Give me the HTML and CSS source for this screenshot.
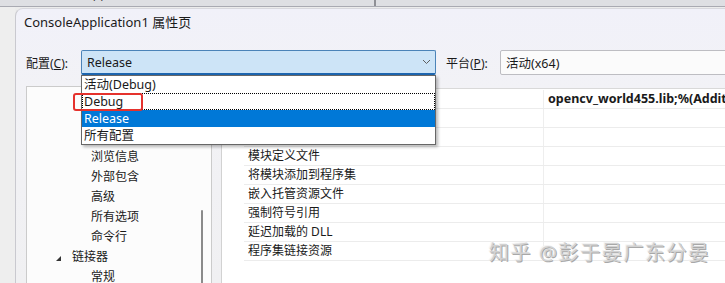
FILE: index.html
```html
<!DOCTYPE html>
<html lang="zh-CN">
<head>
    <meta charset="UTF-8">
    <title>ConsoleApplication1 属性页</title>
    <link rel="stylesheet" href="styles.css">
</head>
<body>

<!-- 背后的 VS 窗口，只露出一条 -->
<div class="topbar">
    <span class="tb-left">ConsoleApplication1</span>
    <span class="tb-sep"></span>
    <span class="tb-right">(全局范围)</span>
</div>

<div class="shell">
    <div class="gutter"></div>

    <div class="dialog">
        <div class="title">ConsoleApplication1 属性页</div>

        <div class="config-row">
            <label class="lbl">配置(<u>C</u>):</label>
            <div class="combo-wrap">
                <div class="combo combo-open">
                    <span>Release</span>
                    <svg class="chev" width="9" height="6" viewBox="0 0 9 6">
                        <polyline points="1,1 4.5,4.5 8,1" fill="none" stroke="#5f5f5f" stroke-width="1"/>
                    </svg>
                </div>
                <ul class="droplist">
                    <li>活动(Debug)</li>
                    <li class="focused">Debug</li>
                    <li class="selected">Release</li>
                    <li>所有配置</li>
                    <li class="redbox"></li>
                </ul>
            </div>
            <label class="lbl lbl-platform">平台(<u>P</u>):</label>
            <div class="combo combo-plain"><span>活动(x64)</span></div>
        </div>

        <div class="content">
            <div class="tree">
                <div class="node l2 hidden-row"></div>
                <div class="node l2 hidden-row"></div>
                <div class="node l2 hidden-row"></div>
                <div class="node l2">浏览信息</div>
                <div class="node l2">外部包含</div>
                <div class="node l2">高级</div>
                <div class="node l2">所有选项</div>
                <div class="node l2">命令行</div>
                <div class="node l1">
                    <svg class="tri" width="5" height="5" viewBox="0 0 5 5"><polygon points="5,0 5,5 0,5" fill="#333"/></svg>
                    链接器
                </div>
                <div class="node l2">常规</div>
                <div class="thumb"></div>
            </div>

            <div class="grid">
                <div class="row"><div class="name"></div><div class="val bold">opencv_world455.lib;%(AdditionalDependencies)</div></div>
                <div class="row"><div class="name"></div><div class="val"></div></div>
                <div class="row"><div class="name"></div><div class="val"></div></div>
                <div class="row"><div class="name">模块定义文件</div><div class="val"></div></div>
                <div class="row"><div class="name">将模块添加到程序集</div><div class="val"></div></div>
                <div class="row"><div class="name">嵌入托管资源文件</div><div class="val"></div></div>
                <div class="row"><div class="name">强制符号引用</div><div class="val"></div></div>
                <div class="row"><div class="name">延迟加载的 DLL</div><div class="val"></div></div>
                <div class="row"><div class="name">程序集链接资源</div><div class="val"></div></div>
                <div class="mark">知乎 @彭于晏广东分晏</div>
            </div>
        </div>
    </div>
</div>

</body>
</html>
```

FILE: styles.css
```css
html, body {
    margin: 0;
    padding: 0;
}
body {
    width: 725px;
    height: 283px;
    overflow: hidden;
    background-color: #ececec;
    font-family: "Noto Sans", "Noto Sans CJK SC", sans-serif;
    font-size: 12px;
    color: #1a1a1a;
}
.topbar {
    height: 6px;
    overflow: hidden;
    background-color: #dedfe3;
    border-bottom: 1px solid #a9aab2;
    display: flex;
    align-items: flex-start;
    white-space: nowrap;
}
.topbar span {
    margin-top: -13px;
    line-height: 14px;
    font-size: 12px;
}
.tb-left {
    margin-left: 40px;
    color: #444;
}
.tb-sep {
    width: 2px;
    height: 30px;
    background-color: #8f9096;
    margin-left: 219px;
}
.tb-right {
    margin-left: 10px;
    color: #222;
    font-weight: bold;
}
.shell {
    display: flex;
    height: 276px;
}
.gutter {
    width: 15px;
    flex: none;
    background-color: #eeeeee;
}
.dialog {
    flex: none;
    width: 760px;
    margin-top: 1px;
    background: linear-gradient(#f1f1f9, #f2f2f6 80px, #f0f0f2);
    border-left: 1px solid #c9c9cf;
    border-top: 1px solid #d8d8de;
    border-top-left-radius: 8px;
    position: relative;
}
.title {
    height: 27px;
    line-height: 27px;
    padding-left: 8px;
    font-size: 13px;
    color: #1b1b1b;
}
.config-row {
    display: flex;
    align-items: center;
    margin-top: 14px;
    padding-left: 10px;
    height: 25px;
}
.lbl {
    width: 55px;
    flex: none;
    font-size: 12px;
}
.lbl-platform {
    margin-left: 10px;
    width: 54px;
}
.combo-wrap {
    position: relative;
    width: 355px;
    flex: none;
}
.combo {
    box-sizing: border-box;
    height: 25px;
    display: flex;
    align-items: center;
    padding-left: 5px;
    font-size: 12.5px;
}
.combo-open {
    background-color: #cde4f7;
    border: 1px solid #4b83b8;
    border-bottom: 2px solid #1d66b0;
    border-radius: 2px;
}
.chev {
    margin-left: auto;
    margin-right: 4px;
}
.combo-plain {
    width: 260px;
    flex: none;
    background-color: #fbfbfb;
    border: 1px solid #bdbdc2;
    border-radius: 2px;
}
.droplist {
    position: absolute;
    top: 25px;
    left: 0;
    width: 355px;
    box-sizing: border-box;
    margin: 0;
    padding: 0;
    list-style: none;
    background-color: #fff;
    border: 1px solid #676767;
    box-shadow: 2px 2px 3px rgba(0, 0, 0, 0.28);
    z-index: 5;
}
.droplist li {
    height: 17px;
    line-height: 17px;
    padding-left: 2px;
    font-size: 12.5px;
    box-sizing: border-box;
}
.droplist li.focused {
    border: 1px dotted #000;
    padding-left: 1px;
    line-height: 15px;
}
.droplist li.selected {
    background-color: #0078d7;
    color: #fff;
}
.droplist li.redbox {
    position: absolute;
    top: 17px;
    left: -9px;
    width: 70px;
    height: 18px;
    border: 2px solid #e5322d;
    border-radius: 3px;
    padding: 0;
}
.content {
    display: flex;
    align-items: flex-start;
    margin-top: 11px;
    padding-left: 10px;
    height: 200px;
}
.tree {
    position: relative;
    width: 186px;
    height: 200px;
    box-sizing: border-box;
    background-color: #fcfcfc;
    border: 1px solid #cbcbcb;
    flex: none;
}
.node {
    height: 20px;
    line-height: 20px;
    white-space: nowrap;
}
.node.l2 {
    padding-left: 64px;
}
.node.l1 {
    padding-left: 29px;
    display: flex;
    align-items: center;
}
.tri {
    margin-right: 11px;
    margin-top: 3px;
}
.thumb {
    position: absolute;
    left: 174px;
    top: 123px;
    width: 2px;
    height: 90px;
    border-radius: 1px;
    background-color: #8b8b8b;
}
.grid {
    position: relative;
    margin-left: 9px;
    margin-top: 2px;
    width: 520px;
    height: 200px;
    background-color: #fff;
    border-left: 1px solid #d2d2d2;
    border-top: 1px solid #d9d9d9;
    padding-top: 1px;
}
.row {
    display: flex;
    height: 19px;
    box-sizing: border-box;
    margin-left: 22px;
    border-bottom: 1px solid #ececec;
}
.name {
    width: 299px;
    flex: none;
    padding-left: 4px;
    box-sizing: border-box;
    line-height: 18px;
    white-space: nowrap;
}
.val {
    flex: 1;
    padding-left: 4px;
    border-left: 1px solid #eeeeee;
    line-height: 18px;
    white-space: nowrap;
    overflow: hidden;
}
.val.bold {
    font-weight: bold;
    font-size: 12.5px;
}
.mark {
    position: absolute;
    left: 267px;
    top: 152px;
    font-size: 20px;
    line-height: 24px;
    color: #d2d2d2;
    letter-spacing: 1.6px;
    white-space: nowrap;
    text-shadow: 1px 1px 0 #a8a8a8, -1px -1px 0 #f4f4f4;
}
```
